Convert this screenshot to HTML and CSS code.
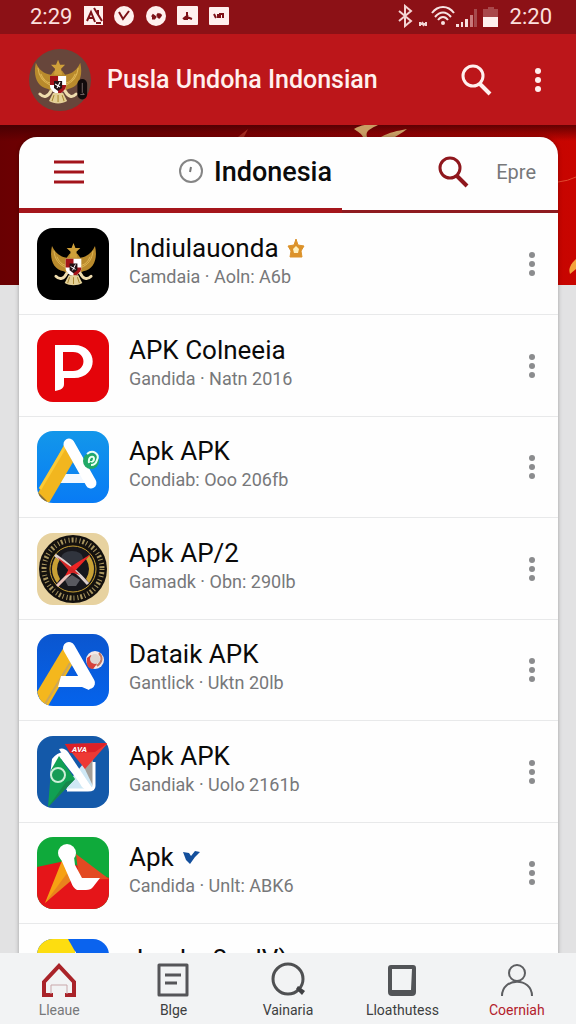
FILE: index.html
```html
<!DOCTYPE html>
<html lang="id">
  <head>
    <meta charset="utf-8">
    <meta name="viewport" content="width=device-width, initial-scale=1">
    <title>Pusla Undoha Indonsian</title>
    <link rel="stylesheet" href="styles.css">
  </head>
  <body>
    <svg class="defs" aria-hidden="true">
      <symbol id="garuda" viewBox="0 0 48 44">
        <path d="M2 3c-3 13 1 24 12 26l6 3h8l6-3c11-2 15-13 12-26-3 7-8 11-15 12l-3-4h-8l-3 4C10 14 5 10 2 3z" fill="#b98a2c"/>
        <path d="M4 8c1 9 5 14 12 17M7 14c2 5 5 8 9 9M44 8c-1 9-5 14-12 17M41 14c-2 5-5 8-9 9" stroke="#e0b755" fill="none"/>
        <path d="M24 0l2 5 5 0-4 4 1 6h-8l1-6-4-4 5 0z" fill="#cfa03a"/>
        <path d="M16 16h16v10c0 4-4 7-8 8-4-1-8-4-8-8z" fill="#fff"/>
        <path d="M16 16h8v9h-8zM24 25h8c0 5-4 8-8 9z" fill="#a31217"/>
        <path d="M20 21h8v7l-4 3-4-3z" fill="#231315"/>
        <path d="M21 24l5 3M26 22l-3 6" stroke="#fff"/>
        <path d="M17 31c-3 6-7 7-11 3M31 31c3 6 7 7 11 3" stroke="#efdcae" stroke-width="3" stroke-linecap="round" fill="none"/>
        <path d="M19 33h10l4 8c-5 3-13 3-18 0z" fill="#e3d096"/>
        <path d="M20 35l-2 6M24 35v7M28 35l2 6" stroke="#a6852f"/>
      </symbol>
      <symbol id="dots" viewBox="0 0 8 28">
        <circle cx="4" cy="5" r="3"/><circle cx="4" cy="14" r="3"/><circle cx="4" cy="23" r="3"/>
      </symbol>
      <symbol id="search" viewBox="0 0 32 32">
        <circle cx="12" cy="12" r="10" fill="none" stroke="currentColor" stroke-width="3"/>
        <path d="M18 19L29 30" stroke="currentColor" stroke-width="4"/>
      </symbol>
      <linearGradient id="sky" x2="0" y2="1"><stop stop-color="#1397ea"/><stop offset="1" stop-color="#087bf5"/></linearGradient>
      <linearGradient id="royal" x2="0" y2="1"><stop stop-color="#0b56cf"/><stop offset="1" stop-color="#0563ec"/></linearGradient>
    </svg>

    <div class="status">
      <span class="clock">2:29</span>
      <svg class="status-apps" width="146" height="20" viewBox="0 0 146 20">
        <g fill="#fff0ee">
          <path d="M0 0h19v19H0z"/><circle cx="40" cy="10" r="10"/><circle cx="72" cy="10" r="10"/>
          <rect x="93" width="21" height="19" rx="1"/><rect x="125" y="1" width="20" height="18" rx="1"/>
        </g>
        <g fill="none" stroke="#7d1117" stroke-width="2">
          <path d="M3 15l4-9 4 10M4 12h6M10 2l8 13M14 4v5M12 17h5"/>
          <path d="M35 6l4 7 6-8"/>
          <path d="M68 9l4 3M73 8l4 3M77 8l-3 4M68 12h3" stroke-width="3"/>
          <path d="M103 6v5l5 2M104 9l-5 4M100 13h4"/>
          <path d="M130 8l2 4M134 8v4M136 12V8h3v4"/>
        </g>
      </svg>
      <svg class="status-system" width="100" height="24" viewBox="0 0 100 24">
        <path d="M1 7l12 10-6 5V2l6 5L1 17" fill="none" stroke="#f3d5d4" stroke-width="2"/>
        <path d="M22 18v4M22 20h6M28 18v4M24 18l2 4" stroke="#f3d5d4" stroke-width="2"/>
        <g fill="none" stroke="#f7e3e2" stroke-width="2">
          <path d="M34 9c6-8 16-8 22 0M37 13c5-6 11-6 16 0M40 16c3-4 7-4 10 0"/>
        </g>
        <circle cx="45" cy="19" r="2" fill="#f7e3e2"/>
        <path d="M58 20h3v3h-3zM63 18h2v5h-2zM67 15h3v8h-3z" fill="#f7dedd"/>
        <path d="M72 11h3v12h-3z" fill="#c9797b"/><path d="M76 5h3v18h-3z" fill="#a6494c"/>
        <path d="M85 5h5V3h6v2h4v8H85z" fill="#a9484b"/><path d="M85 13h15v10H85z" fill="#fff0ee"/>
      </svg>
      <span class="clock">2:20</span>
    </div>

    <header class="appbar">
      <svg class="avatar" viewBox="0 0 64 64">
        <circle cx="32" cy="32" r="32" fill="#67463b"/>
        <use href="#garuda" x="5" y="11" width="50" height="46"/>
        <rect x="50" y="31" width="10" height="21" rx="5" fill="#120b0c"/>
        <path d="M55 35v10l2 2h-4" fill="none" stroke="#776766"/>
      </svg>
      <h1>Pusla Undoha Indonsian</h1>
      <button class="icon-btn" aria-label="Search"><svg width="32" height="32"><use href="#search"/></svg></button>
      <button class="icon-btn" aria-label="More"><svg width="10" height="28" fill="currentColor"><use href="#dots"/></svg></button>
    </header>

    <main>
      <svg class="banner" viewBox="0 0 576 160" preserveAspectRatio="none" aria-hidden="true">
        <defs>
          <linearGradient id="red"><stop stop-color="#690002"/><stop offset=".3" stop-color="#850002"/><stop offset=".6" stop-color="#a40305"/><stop offset="1" stop-color="#c90500"/></linearGradient>
          <linearGradient id="shade" x2="0" y2="1"><stop stop-color="#390003" stop-opacity=".7"/><stop offset="1" stop-color="#390003" stop-opacity="0"/></linearGradient>
        </defs>
        <path d="M0 0h576v160H0z" fill="url(#red)"/>
        <path d="M0 0h576v16H0z" fill="url(#shade)"/>
        <path d="M354 4c8-5 17-5 24-4-8 4-13 6-11 12h-4c-2-4-5-5-9-8zM381 12c9-5 16-6 26-8-5 4-9 6-12 8z" fill="#c99e64"/>
        <path d="M238 12l10-8-4 8zM199 13l8-4" fill="#a32c22"/>
        <path d="M558 57q10-1 18-5" fill="none" stroke="#e24a30"/>
        <path d="M576 134c-5 5-8 9-6 15l6-5z" fill="#f4a13c"/>
      </svg>

      <section class="card">
        <div class="toolbar">
          <button class="icon-btn menu" aria-label="Menu">
            <svg width="30" height="24" viewBox="0 0 30 24"><path d="M0 2h30M0 12h30M0 22h30" stroke="#a3151c" stroke-width="3"/></svg>
          </button>
          <h2>
            <svg width="26" height="26" viewBox="0 0 26 26"><circle cx="13" cy="12" r="11" fill="none" stroke="#858585" stroke-width="2"/><path d="M13 8l-1 5" stroke="#777" stroke-width="2"/></svg>
            Indonesia
          </h2>
          <button class="icon-btn find" aria-label="Find"><svg width="32" height="32"><use href="#search"/></svg></button>
          <button class="text-btn">Epre</button>
        </div>

        <ul class="apps">
          <li>
            <svg class="logo" viewBox="0 0 72 72"><path d="M0 0h72v72H0z" fill="#000"/><use href="#garuda" x="13" y="15" width="47" height="43"/></svg>
            <div class="info">
              <h3>Indiulauonda <svg width="18" height="20" viewBox="0 0 18 20"><path d="M9 1l2 6 6 1-3 5 1 6H3l1-6-3-5 6-1z" fill="#dc922a" stroke="#dc922a" stroke-linejoin="round"/><path d="M9 8l3 3-1 4H7l-1-4z" fill="#fff0bd"/></svg></h3>
              <p>Camdaia · Aoln: A6b</p>
            </div>
            <button class="icon-btn more" aria-label="Options"><svg width="8" height="28"><use href="#dots"/></svg></button>
          </li>
          <li>
            <svg class="logo" viewBox="0 0 72 72"><path d="M0 0h72v72H0z" fill="#e4040a"/><path d="M18 15h19c25 0 25 33 0 33H27v6c0 4-3 6-9 7zM26 22v19h10c14 0 14-19 0-19z" fill="#fff" fill-rule="evenodd"/></svg>
            <div class="info">
              <h3>APK Colneeia</h3>
              <p>Gandida · Natn 2016</p>
            </div>
            <button class="icon-btn more" aria-label="Options"><svg width="8" height="28"><use href="#dots"/></svg></button>
          </li>
          <li>
            <svg class="logo" viewBox="0 0 72 72">
              <path d="M0 0h72v72H0z" fill="url(#sky)"/>
              <path d="M24 43h24v9H22z" fill="#f2f8ff"/>
              <path d="M27 14l9 17-24 41H4l-4-8z" fill="#f2b61f"/><path d="M28 16L3 58" stroke="#fcca35" stroke-width="3"/><path d="M2 62l8 8-3 2-7-6z" fill="#836c3e"/>
              <path d="M32 13l22 39" stroke="#fff" stroke-width="11" stroke-linecap="round"/>
              <circle cx="54" cy="30" r="8" fill="#21a967"/><path d="M52 32c-1-7 5-8 5-4 0 3-3 3-3 2M50 23c6-5 13 0 10 6-1 4-4 5-6 5" fill="none" stroke="#e9fff2" stroke-width="2"/>
            </svg>
            <div class="info">
              <h3>Apk APK</h3>
              <p>Condiab: Ooo 206fb</p>
            </div>
            <button class="icon-btn more" aria-label="Options"><svg width="8" height="28"><use href="#dots"/></svg></button>
          </li>
          <li>
            <svg class="logo" viewBox="0 0 72 72">
              <path d="M0 0h72v72H0z" fill="#e7d2a0"/>
              <circle cx="36" cy="36" r="34" fill="#14110e"/>
              <circle cx="36" cy="36" r="29" fill="none" stroke="#a8955f" stroke-width="5" stroke-dasharray="1 2 2 2 1 3"/>
              <circle cx="36" cy="36" r="23" fill="#17171c" stroke="#c9a135" stroke-width="1"/>
              <path d="M20 22q-10 14 0 28l3-4q-6-10 0-20zM52 22q10 14 0 28l-3-4q6-10 0-20z" fill="#c9a135"/>
              <ellipse cx="35" cy="25" rx="11" ry="7" fill="#30343d"/><path d="M28 47l7-5 8 5-4 6h-8z" fill="#59595f"/>
              <path d="M18 22q18 12 33 29" fill="none" stroke="#ddd0cd" stroke-width="3"/><path d="M20 53l13-13" stroke="#e9c4bd" stroke-width="3"/>
              <path d="M54 21L37 39l-9 4 5-9z" fill="#ee2525"/><path d="M20 24l14 10 9 8-10-3z" fill="#d22525"/>
            </svg>
            <div class="info">
              <h3>Apk AP/2</h3>
              <p>Gamadk · Obn: 290lb</p>
            </div>
            <button class="icon-btn more" aria-label="Options"><svg width="8" height="28"><use href="#dots"/></svg></button>
          </li>
          <li>
            <svg class="logo" viewBox="0 0 72 72">
              <path d="M0 0h72v72H0z" fill="url(#royal)"/>
              <path d="M27 13l8 18-24 41H5l-5-14z" fill="#f4b71d"/><path d="M8 70l25-41" stroke="#c9a65c" stroke-width="2"/>
              <circle cx="58" cy="26" r="9" fill="#f4e9e7"/><path d="M50 24c-1 7 1 11 6 11l4-5-6-9z" fill="#d6423b"/><circle cx="58" cy="25" r="5" fill="#ded7d2"/><path d="M62 19q6 7-2 13" fill="none" stroke="#c37960" stroke-width="2"/>
              <path d="M32 14l20 35" stroke="#fff" stroke-width="12" stroke-linecap="round"/>
              <path d="M24 42h28l4 8-4 6-7-3H21z" fill="#fff"/>
            </svg>
            <div class="info">
              <h3>Dataik APK</h3>
              <p>Gantlick · Uktn 20lb</p>
            </div>
            <button class="icon-btn more" aria-label="Options"><svg width="8" height="28"><use href="#dots"/></svg></button>
          </li>
          <li>
            <svg class="logo" viewBox="0 0 72 72">
              <path d="M0 0h72v72H0z" fill="#1459a9"/>
              <path d="M46 28l11-1v27H29l4-10z" fill="#cfe8f5"/><path d="M46 29l10-5v26z" fill="#a49f98"/>
              <path d="M13 40l2-17q7-9 15-6l25 35q-1 5-8 0L24 23z" fill="#fff"/>
              <path d="M22 20l16 23L11 71l3-37z" fill="#10a053"/><path d="M29 46l9-3-27 28z" fill="#17864b"/>
              <circle cx="21" cy="39" r="7" fill="#159b56" stroke="#ccefd8" stroke-width="2"/>
              <path d="M57 26v24q0 4-6 4H30" fill="none" stroke="#fff" stroke-width="3"/>
              <path d="M28 8l43-1-23 26z" fill="#ee3934"/><path d="M28 8l43-1-13 9-25 1z" fill="#dc2027"/>
              <path d="M22 13q5-2 9 3l24 36q-5 4-10-1z" fill="#fff"/>
              <text class="logo-tag" x="35" y="16">AVA</text>
            </svg>
            <div class="info">
              <h3>Apk APK</h3>
              <p>Gandiak · Uolo 2161b</p>
            </div>
            <button class="icon-btn more" aria-label="Options"><svg width="8" height="28"><use href="#dots"/></svg></button>
          </li>
          <li>
            <svg class="logo" viewBox="0 0 72 72">
              <path d="M0 0h72v72H0z" fill="#0faa3b"/><path d="M0 30l28-6 44 17v31H0z" fill="#e51519"/><path d="M39 17l33 25-30 1z" fill="#e34a22"/>
              <path d="M26 21l9 19L8 66z" fill="#f6a113"/><path d="M31 35l5 7L8 66z" fill="#e9841d"/>
              <circle cx="30" cy="16" r="9" fill="#fff"/><path d="M23 20h14l1 8 7 13h18l-7 9q-2 3-7 3H40q-4-2-6-8z" fill="#fff"/>
            </svg>
            <div class="info">
              <h3>Apk <svg width="18" height="16" viewBox="0 0 18 16"><path d="M1 3l6 1 2 3 4-5 5 1-5 5-5 7-4-4z" fill="#134f9c"/></svg></h3>
              <p>Candida · Unlt: ABK6</p>
            </div>
            <button class="icon-btn more" aria-label="Options"><svg width="8" height="28"><use href="#dots"/></svg></button>
          </li>
          <li>
            <svg class="logo" viewBox="0 0 72 72"><path d="M0 0h72v72H0z" fill="#0a63ee"/><path d="M0 0h31l8 14-8 20H0z" fill="#fddd10"/><path d="M39 12l-6 10h6z" fill="#fff"/></svg>
            <div class="info">
              <h3>Jarak · 2 · dV)</h3>
            </div>
            <button class="icon-btn more" aria-label="Options"><svg width="8" height="28"><use href="#dots"/></svg></button>
          </li>
        </ul>
      </section>
    </main>

    <nav class="tabs">
      <a href="#home" class="muted">
        <svg width="36" height="36" viewBox="0 0 36 36"><path d="M12 33H3V20L18 4l15 16v13h-9" fill="none" stroke="#a92329" stroke-width="4"/><path d="M10 32v-9h16v9" fill="none" stroke="#c9a7aa"/></svg>
        Lleaue
      </a>
      <a href="#blog">
        <svg width="36" height="36" viewBox="0 0 36 36"><path d="M3 3h28v30H3zM9 13h16M9 21h12" fill="none" stroke="#555558" stroke-width="3" stroke-linejoin="round"/></svg>
        Blge
      </a>
      <a href="#search">
        <svg width="36" height="36" viewBox="0 0 36 36"><circle cx="18" cy="17" r="15" fill="none" stroke="#4f5052" stroke-width="3"/><path d="M26 27l2-3 7 5-3 4z" fill="#404144"/></svg>
        Vainaria
      </a>
      <a href="#downloads">
        <svg width="36" height="36" viewBox="0 0 36 36"><path d="M7 3h22q3 0 3 3v24q0 4-4 4H8q-4 0-4-4V6q0-3 3-3zM8 7v21h19l1-21z" fill="#525457" fill-rule="evenodd"/></svg>
        Lloathutess
      </a>
      <a href="#account" class="active">
        <svg width="36" height="36" viewBox="0 0 36 36"><circle cx="18" cy="11" r="8"/><path d="M3 34c0-19 30-19 30 0"/></svg>
        Coerniah
      </a>
    </nav>
  </body>
</html>
```

FILE: styles.css
```css
* {
  box-sizing: border-box;
}
body {
  margin: 0;
  height: 100vh;
  display: flex;
  flex-direction: column;
  overflow: hidden;
  font-family: Roboto, "Liberation Sans", sans-serif;
  background: #e2e2e3;
}
h1, h2, h3, p, ul {
  margin: 0;
  padding: 0;
}
svg {
  flex: none;
}
button {
  border: 0;
  padding: 0;
  background: none;
  font-family: inherit;
}
.defs {
  position: absolute;
  width: 0;
  height: 0;
}

/* status bar */
.status {
  height: 34px;
  flex: none;
  display: flex;
  align-items: center;
  gap: 12px;
  padding: 0 24px 2px 30px;
  background: #8c1116;
}
.clock {
  font-size: 22px;
  color: #fbe0df;
}
.status-system {
  margin-left: auto;
}

/* app bar */
.appbar {
  height: 91px;
  flex: none;
  display: flex;
  align-items: center;
  padding: 0 33px 0 29px;
  color: #fff0ee;
  background: #bc161a;
}
.avatar {
  width: 62px;
  height: 64px;
}
.appbar h1 {
  flex: 1;
  margin-left: 16px;
  font-size: 25px;
  font-weight: 500;
  white-space: nowrap;
}
.icon-btn {
  display: flex;
  color: inherit;
}
.appbar .icon-btn + .icon-btn {
  margin-left: 40px;
}

/* content */
main {
  flex: 1;
  min-height: 0;
  position: relative;
  overflow: hidden;
  padding: 12px 18px 0 19px;
}
.banner {
  position: absolute;
  top: 0;
  left: 0;
  width: 100%;
  height: 160px;
}
.card {
  position: relative;
  border-radius: 18px;
  background: #fefefe;
  box-shadow: 0 0 4px rgba(0, 0, 0, .3);
}
.toolbar {
  height: 76px;
  display: flex;
  align-items: center;
  padding: 0 22px 6px 35px;
  background:
    linear-gradient(#a5161c, #a5161c) left bottom / 60% 5px no-repeat,
    linear-gradient(#8f1b20, #8f1b20) left bottom / 100% 3px no-repeat;
}
.toolbar h2 {
  display: flex;
  align-items: center;
  gap: 10px;
  margin-left: 94px;
  font-size: 27px;
  font-weight: 500;
  color: #0b0b0b;
}
.find {
  margin-left: auto;
  margin-right: 26px;
  color: #8f171d;
}
.text-btn {
  font-size: 20px;
  color: #77787a;
}
.apps {
  padding-top: 1px;
  list-style: none;
}
.apps li {
  height: 101px;
  display: flex;
  align-items: center;
  padding: 0 22px 0 18px;
  border-bottom: 1px solid #e8e9ea;
}
.apps li:nth-child(even) {
  height: 102px;
}
.logo {
  width: 72px;
  height: 72px;
  border-radius: 16px;
}
.logo-tag {
  font-size: 8px;
  font-weight: bold;
  font-style: italic;
  fill: #fff;
}
.info {
  flex: 1;
  min-height: 62px;
  margin-left: 20px;
}
.info h3 {
  display: flex;
  align-items: center;
  gap: 8px;
  font-size: 26px;
  line-height: 30px;
  font-weight: 400;
  color: #0a0a0a;
}
.info p {
  font-size: 18px;
  line-height: 28px;
  color: #77787a;
}
.more {
  fill: #8b8c8e;
}

/* bottom navigation */
.tabs {
  flex: none;
  display: grid;
  grid-template-columns: repeat(5, 1fr);
  padding: 9px 2px 5px;
  background: #f2f3f4;
}
.tabs a {
  display: flex;
  flex-direction: column;
  align-items: center;
  gap: 3px;
  font-size: 14px;
  line-height: 18px;
  color: #3d3e40;
  text-decoration: none;
}
.tabs .muted {
  color: #77787a;
}
.tabs .active {
  color: #b3202b;
}
.active svg {
  fill: none;
  stroke: #5d5e61;
  stroke-width: 2;
}
```
